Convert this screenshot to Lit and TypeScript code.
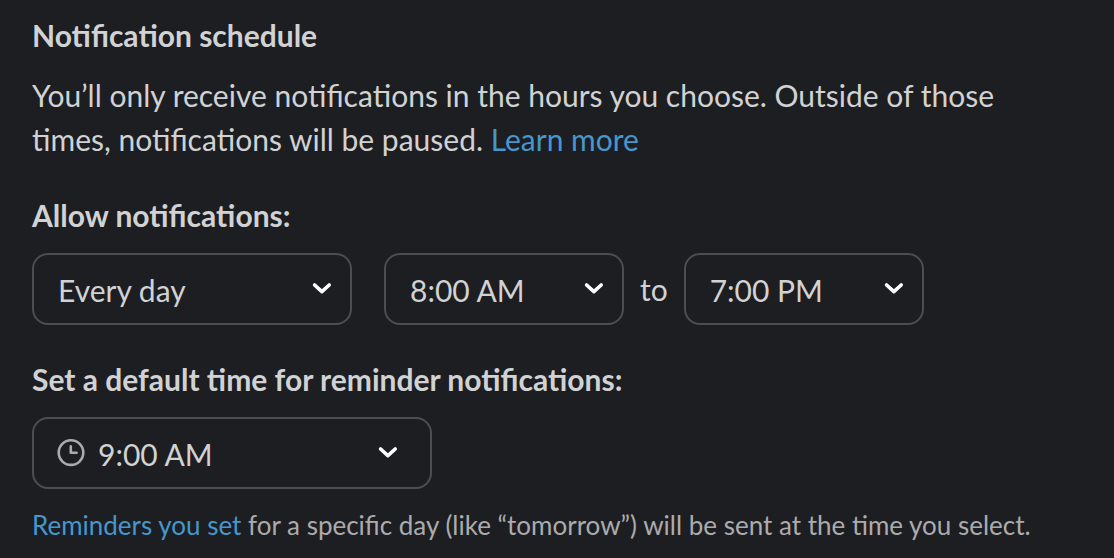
import { LitElement, html, css, svg } from "lit";
import { customElement } from "lit/decorators.js";

const chevron = svg`<path d="M2.6 3 L9.9 9.7 L17.2 3" fill="none" stroke="#ffffff" stroke-width="3.6" stroke-linecap="round" stroke-linejoin="round" />`;

@customElement("app-root")
export class AppRoot extends LitElement {
  static styles = css`
    :host {
      display: block;
      box-sizing: border-box;
      min-height: 100vh;
      padding: 13px 32px;
      background: #1d1e22;
      color: #d1d2d3;
      font-family: Lato, sans-serif;
      font-size: 30px;
      line-height: 44px;
    }
    .title,
    .label {
      display: block;
      margin: 0;
      font-size: 30px;
      font-weight: 700;
    }
    .intro {
      max-width: 1000px;
      margin: 16px 0 32px;
    }
    .link {
      color: #4597cd;
      text-decoration: none;
    }
    .row {
      display: flex;
      flex-wrap: wrap;
      align-items: center;
      margin: 16px 0 32px;
      gap: 16px;
    }
    .field {
      display: grid;
      align-items: center;
      width: 240px;
    }
    .field > * {
      grid-area: 1 / 1;
    }
    .day {
      width: 320px;
      margin-right: 16px;
    }
    .reminder {
      width: 400px;
      margin: 16px 0 14px;
    }
    .select {
      appearance: none;
      box-sizing: border-box;
      width: 100%;
      height: 72px;
      margin: 0;
      padding: 2px 24px 0;
      border: 2px solid #4d4e51;
      border-radius: 16px;
      background: transparent;
      color: inherit;
      font: inherit;
    }
    .reminder .select {
      padding-left: 64px;
    }
    .chevron {
      justify-self: end;
      width: 20px;
      height: 14px;
      margin-right: 20px;
      pointer-events: none;
    }
    .reminder .chevron {
      margin-right: 34px;
    }
    .clock {
      width: 28px;
      height: 28px;
      margin-left: 25px;
      pointer-events: none;
    }
    .note {
      margin: 0;
      color: #ababad;
      font-size: 26px;
    }
  `;

  private select(kind: string, name: string, value: string) {
    return html`<div class="field ${kind}">
      <select class="select" id=${kind + "-select"} aria-label=${name}>
        <option>${value}</option>
      </select>
      ${kind === "reminder"
        ? html`<svg class="clock" viewBox="0 0 28 28" fill="none" stroke="#ababad" stroke-width="2.6" aria-hidden="true">
            <circle cx="14" cy="13.6" r="12.3" />
            <path d="M13.8 7.4 V13.8 H19.6" stroke-linecap="round" stroke-linejoin="round" />
          </svg>`
        : null}
      <svg class="chevron" viewBox="0 0 20 14" aria-hidden="true">${chevron}</svg>
    </div>`;
  }

  render() {
    return html`
      <h2 class="title">Notification schedule</h2>
      <p class="intro">
        You’ll only receive notifications in the hours you choose. Outside of those times, notifications will be paused.
        <a class="link" href="#">Learn more</a>
      </p>
      <label class="label" for="day-select">Allow notifications:</label>
      <div class="row">
        ${this.select("day", "Allow notifications", "Every day")}
        ${this.select("from", "Start time", "8:00 AM")}
        <span>to</span>
        ${this.select("until", "End time", "7:00 PM")}
      </div>
      <label class="label" for="reminder-select">Set a default time for reminder notifications:</label>
      ${this.select("reminder", "Default reminder time", "9:00 AM")}
      <p class="note"><a class="link" href="#">Reminders you set</a> for a specific day (like “tomorrow”) will be sent at the time you select.</p>
    `;
  }
}
